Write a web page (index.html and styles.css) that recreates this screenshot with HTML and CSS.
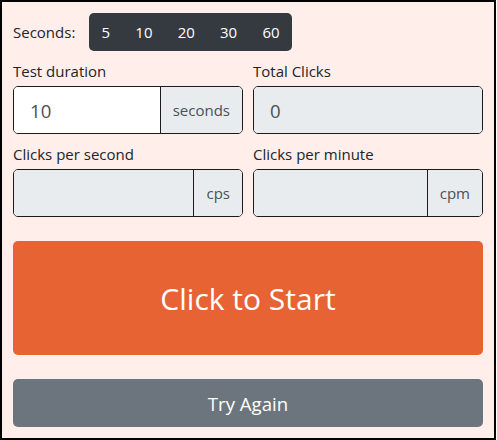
FILE: index.html
```html
<!DOCTYPE html>
<html lang="en">
<head>
<meta charset="utf-8">
<title>Click Speed Test</title>
<link rel="stylesheet" href="styles.css">
</head>
<body>
<div class="frame">
  <div class="seconds-row">
    <span class="seconds-label">Seconds:</span>
    <div class="btn-group">
      <button class="btn-num">5</button>
      <button class="btn-num">10</button>
      <button class="btn-num">20</button>
      <button class="btn-num">30</button>
      <button class="btn-num">60</button>
    </div>
  </div>
  <div class="fields">
    <div class="field">
      <label class="field-label">Test duration</label>
      <div class="input-group">
        <input class="control control-white" type="text" value="10">
        <span class="addon">seconds</span>
      </div>
    </div>
    <div class="field">
      <label class="field-label">Total Clicks</label>
      <div class="input-group">
        <input class="control" type="text" value="0" readonly>
      </div>
    </div>
    <div class="field">
      <label class="field-label">Clicks per second</label>
      <div class="input-group">
        <input class="control" type="text" value="" readonly>
        <span class="addon">cps</span>
      </div>
    </div>
    <div class="field">
      <label class="field-label">Clicks per minute</label>
      <div class="input-group">
        <input class="control" type="text" value="" readonly>
        <span class="addon">cpm</span>
      </div>
    </div>
  </div>
  <button class="btn-start">Click to Start</button>
  <button class="btn-again">Try Again</button>
</div>
</body>
</html>
```
FILE: styles.css
```css
html, body {
  margin: 0;
  padding: 0;
  background: #ffffff;
}

.frame {
  box-sizing: border-box;
  width: 496px;
  height: 440px;
  border: 2px solid #000;
  background: #ffeeea;
  padding: 11px;
  font-family: "Open Sans", "Noto Sans", sans-serif;
  color: #212529;
  display: flex;
  flex-direction: column;
}

.seconds-row {
  display: flex;
  align-items: center;
  height: 38px;
}

.seconds-label {
  width: 76px;
  font-size: 15px;
  line-height: 20px;
}

.btn-group {
  display: flex;
  background: #343a40;
  border-radius: 5px;
  height: 38px;
}

.btn-num {
  font-family: inherit;
  font-size: 15px;
  line-height: 38px;
  height: 38px;
  padding: 0 12.6px;
  border: 0;
  background: transparent;
  color: #fff;
  margin: 0;
}

.fields {
  display: grid;
  grid-template-columns: minmax(0, 1fr) minmax(0, 1fr);
  column-gap: 10px;
  row-gap: 10px;
  margin-top: 10px;
}

.field {
  min-width: 0;
}

.field-label {
  display: block;
  font-size: 15px;
  line-height: 20px;
  margin-bottom: 5px;
}

.input-group {
  box-sizing: border-box;
  display: flex;
  height: 48px;
  border: 1px solid #1b1b1b;
  border-radius: 5px;
  overflow: hidden;
  background: #e9ecef;
}

.control {
  flex: 1 1 0;
  width: 0;
  min-width: 0;
  box-sizing: border-box;
  height: 46px;
  border: 0;
  margin: 0;
  padding: 0 16px;
  font-family: inherit;
  font-size: 18.6px;
  color: #495057;
  background: #e9ecef;
  outline: none;
}

.control-white {
  background: #fff;
}

.addon {
  flex: none;
  display: flex;
  align-items: center;
  padding: 0 12px;
  border-left: 1px solid #1b1b1b;
  background: #e9ecef;
  font-size: 15px;
  color: #495057;
}

.btn-start {
  margin-top: 24px;
  height: 114px;
  border: 0;
  border-radius: 5px;
  background: #e76334;
  color: #fff;
  font-family: inherit;
  font-size: 30px;
}

.btn-again {
  margin-top: 24px;
  height: 48px;
  border: 0;
  border-radius: 5px;
  background: #6c757d;
  color: #fff;
  font-family: inherit;
  font-size: 18.6px;
}
```
